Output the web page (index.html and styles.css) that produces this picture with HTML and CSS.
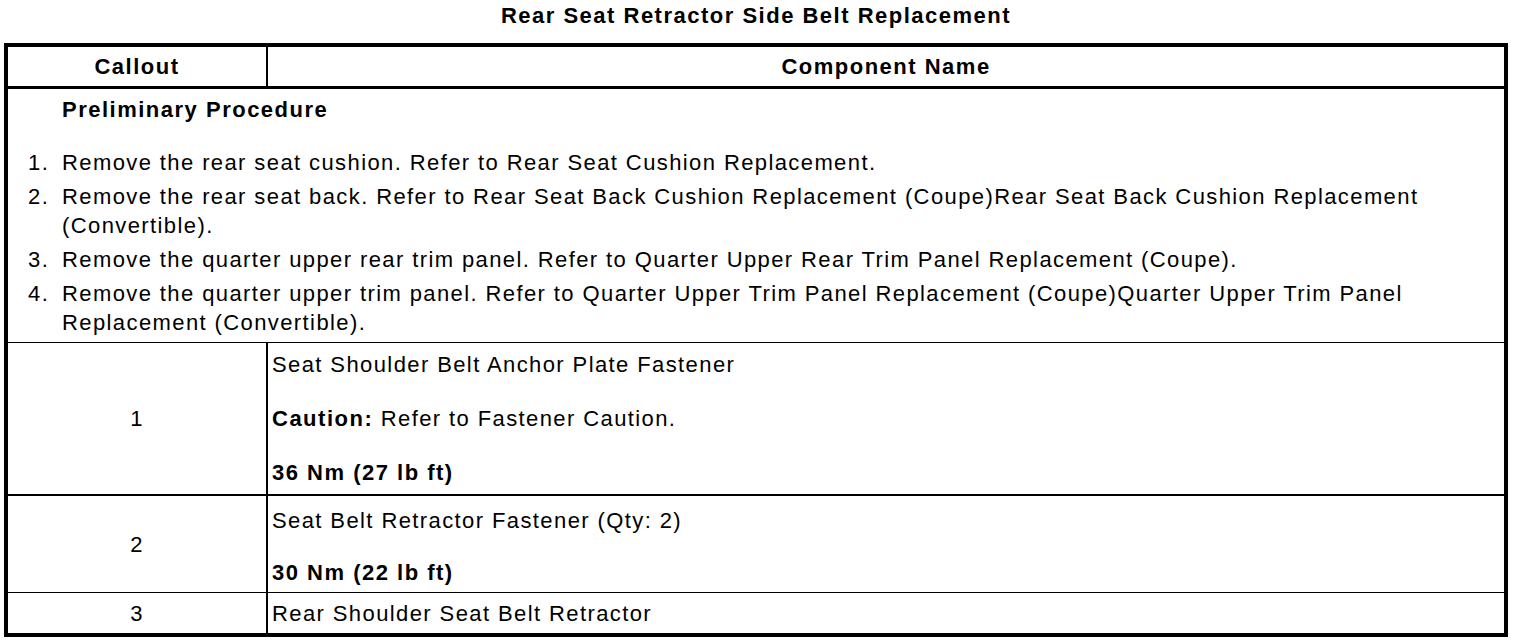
FILE: index.html
```html
<!DOCTYPE html>
<html>
<head>
<meta charset="utf-8">
<link rel="stylesheet" href="styles.css">
</head>
<body>
<h1 class="title">Rear Seat Retractor Side Belt Replacement</h1>
<table class="proc">
  <thead>
    <tr>
      <th class="col-callout">Callout</th>
      <th class="col-name">Component Name</th>
    </tr>
  </thead>
  <tbody>
    <tr class="prelim-row">
      <td colspan="2" class="prelim">
        <div class="prelim-title">Preliminary Procedure</div>
        <ol class="steps">
          <li>Remove the rear seat cushion. Refer to Rear Seat Cushion Replacement.</li>
          <li>Remove the rear seat back. Refer to Rear Seat Back Cushion Replacement (Coupe)Rear Seat Back Cushion Replacement (Convertible).</li>
          <li>Remove the quarter upper rear trim panel. Refer to Quarter Upper Rear Trim Panel Replacement (Coupe).</li>
          <li>Remove the quarter upper trim panel. Refer to Quarter Upper Trim Panel Replacement (Coupe)Quarter Upper Trim Panel Replacement (Convertible).</li>
        </ol>
      </td>
    </tr>
    <tr class="row-a">
      <td class="callout">1</td>
      <td class="name">
        <p>Seat Shoulder Belt Anchor Plate Fastener</p>
        <p><b>Caution:</b> Refer to Fastener Caution.</p>
        <p><b>36 Nm (27 lb ft)</b></p>
      </td>
    </tr>
    <tr class="row-b">
      <td class="callout">2</td>
      <td class="name">
        <p>Seat Belt Retractor Fastener (Qty: 2)</p>
        <p><b>30 Nm (22 lb ft)</b></p>
      </td>
    </tr>
    <tr class="row-c">
      <td class="callout">3</td>
      <td class="name">
        <p>Rear Shoulder Seat Belt Retractor</p>
      </td>
    </tr>
  </tbody>
</table>
</body>
</html>
```
FILE: styles.css
```css
html, body {
  margin: 0;
  padding: 0;
  background: #fff;
}
body {
  padding: 0 12px 0 4px;
  font-family: "Liberation Sans", Arial, Helvetica, sans-serif;
  font-size: 22px;
  line-height: 29px;
  letter-spacing: 1.4px;
  color: #000;
}
b, .title, .proc th, .prelim-title {
  font-weight: bold;
  letter-spacing: 1.5px;
}
.title {
  margin: 0;
  width: 1504px;
  height: 43px;
  box-sizing: border-box;
  padding-top: 1px;
  font-size: 22px;
  line-height: 29px;
  text-align: center;
}
.proc {
  width: 1504px;
  border-collapse: separate;
  border-spacing: 0;
  border: 4px solid #000;
  table-layout: fixed;
}
.proc th {
  text-align: center;
  padding: 5px 0;
  border-bottom: 3px solid #000;
}
.col-callout {
  width: 258px;
  border-right: 2px solid #000;
}
.prelim {
  padding: 6px 4px 5px 20px;
  vertical-align: top;
}
.prelim-title {
  padding-left: 34px;
  margin-bottom: 24px;
}
.steps {
  margin: 0;
  padding: 0;
  list-style: none;
  counter-reset: step;
}
.steps li {
  counter-increment: step;
  display: grid;
  grid-template-columns: 34px 1fr;
  margin-bottom: 5px;
}
.steps li::before {
  content: counter(step) ".";
}
.steps li:last-child {
  margin-bottom: 0;
}
.callout {
  text-align: center;
  vertical-align: middle;
  border-right: 2px solid #000;
  padding: 0;
}
.name {
  vertical-align: top;
  padding: 0 4px;
}
.name p {
  margin: 0;
}
.row-a td { border-top: 1px solid #000; }
.row-b td { border-top: 2px solid #000; }
.row-c td { border-top: 1px solid #000; }
.row-a .name { padding-top: 7px; padding-bottom: 7px; }
.row-a .name p + p { margin-top: 25px; }
.row-b .name { padding-top: 10px; padding-bottom: 5px; }
.row-b .name p + p { margin-top: 23px; }
.row-c .name { padding-top: 6px; padding-bottom: 5px; }
```
